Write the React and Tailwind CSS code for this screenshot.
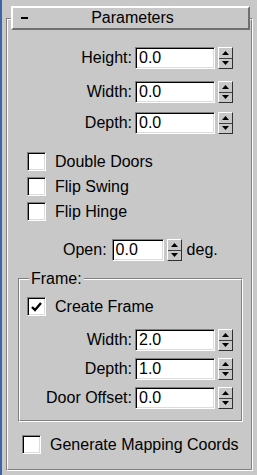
import React from 'react';

const sunken =
  'border border-t-[#808080] border-l-[#808080] border-b-white border-r-white shadow-[inset_1px_1px_0_#000,inset_-1px_-1px_0_#dcdcdc]';

const Arrow = ({ down }) => (
  <svg width="7" height="4" viewBox="0 0 7 4">
    <path d={down ? 'M0 0H7L3.5 4z' : 'M3.5 0L7 4H0z'} fill="#000" />
  </svg>
);

const Spinner = () => (
  <div className="flex h-[22px] w-[15px] flex-col border border-t-white border-l-white border-b-[#303030] border-r-[#303030] bg-[#c8c8c8]">
    <div className="flex flex-1 items-center justify-center border-b border-[#404040]">
      <Arrow />
    </div>
    <div className="flex flex-1 items-center justify-center">
      <Arrow down />
    </div>
  </div>
);

const NumBox = ({ value, w = 'w-[80px]' }) => (
  <div className={`flex h-[22px] ${w} items-center bg-white pl-[3px] leading-none ${sunken}`}>
    {value}
  </div>
);

const Field = ({ label, value, className = '' }) => (
  <div className={`flex h-[22px] items-center justify-end ${className}`}>
    <span className="mr-[3px] leading-none">{label}</span>
    <NumBox value={value} />
    <div className="ml-[3px]">
      <Spinner />
    </div>
  </div>
);

const Check = ({ label, checked, className = '' }) => (
  <div className={`flex h-[19px] items-center ${className}`}>
    <div className={`flex h-[19px] w-[19px] items-center justify-center bg-white ${sunken}`}>
      {checked && (
        <svg width="11" height="10" viewBox="0 0 11 10">
          <path d="M1 5l3 3 6-7" stroke="#000" strokeWidth="2.4" fill="none" />
        </svg>
      )}
    </div>
    <span className="ml-[9px] leading-none">{label}</span>
  </div>
);

export default function App() {
  return (
    <div className="flex h-[475px] w-[257px] overflow-hidden bg-[#c8c8c8] font-['Liberation_Sans',Arial,sans-serif] text-[16px] text-black">
      <div className="w-[2px] bg-[#3d63a8]" />
      <div className="flex flex-1 flex-col pl-[4px] pr-[4px]">
        {/* rollout title button */}
        <div className="relative z-10 mt-[6px] ml-[5px] mr-[3px] flex h-[24px] items-center border-2 border-t-white border-l-white border-b-[#707070] border-r-[#707070] bg-[#c8c8c8]">
          <span className="absolute left-[8px] top-[9px] h-[2px] w-[7px] bg-black" />
          <span className="w-full pl-[4px] text-center leading-none">Parameters</span>
        </div>

        {/* rollout body */}
        <div className="-mt-[12px] border border-t-[#808080] border-l-[#808080] border-b-white border-r-white">
          <div className="flex h-[451px] flex-col border border-t-white border-l-white border-b-[#808080] border-r-[#808080]">
            <Field label="Height:" value="0.0" className="mt-[27px] pr-[18px]" />
            <Field label="Width:" value="0.0" className="mt-[12px] pr-[18px]" />
            <Field label="Depth:" value="0.0" className="mt-[9px] pr-[18px]" />

            <Check label="Double Doors" className="mt-[18px] ml-[19px]" />
            <Check label="Flip Swing" className="mt-[6px] ml-[19px]" />
            <Check label="Flip Hinge" className="mt-[6px] ml-[19px]" />

            <div className="mt-[18px] ml-[55px] flex h-[22px] items-center">
              <span className="mr-[5px] leading-none">Open:</span>
              <NumBox value="0.0" w="w-[52px]" />
              <div className="ml-[3px]">
                <Spinner />
              </div>
              <span className="ml-[5px] leading-none">deg.</span>
            </div>

            {/* Frame group */}
            <div className="relative mt-[17px] ml-[10px] mr-[8px] border border-t-[#808080] border-l-[#808080] border-b-white border-r-white">
              <span className="absolute -top-[9px] left-[10px] bg-[#c8c8c8] px-[2px] leading-[18px]">Frame:</span>
              <div className="flex flex-col border border-t-white border-l-white border-b-[#808080] border-r-[#808080] pb-[11px]">
                <Check label="Create Frame" checked className="mt-[17px] ml-[7px]" />
                <Field label="Width:" value="2.0" className="mt-[13px] pr-[8px]" />
                <Field label="Depth:" value="1.0" className="mt-[7px] pr-[8px]" />
                <Field label="Door Offset:" value="0.0" className="mt-[7px] pr-[8px]" />
              </div>
            </div>

            <Check label="Generate Mapping Coords" className="mt-[13px] ml-[14px]" />
          </div>
        </div>
      </div>
    </div>
  );
}
